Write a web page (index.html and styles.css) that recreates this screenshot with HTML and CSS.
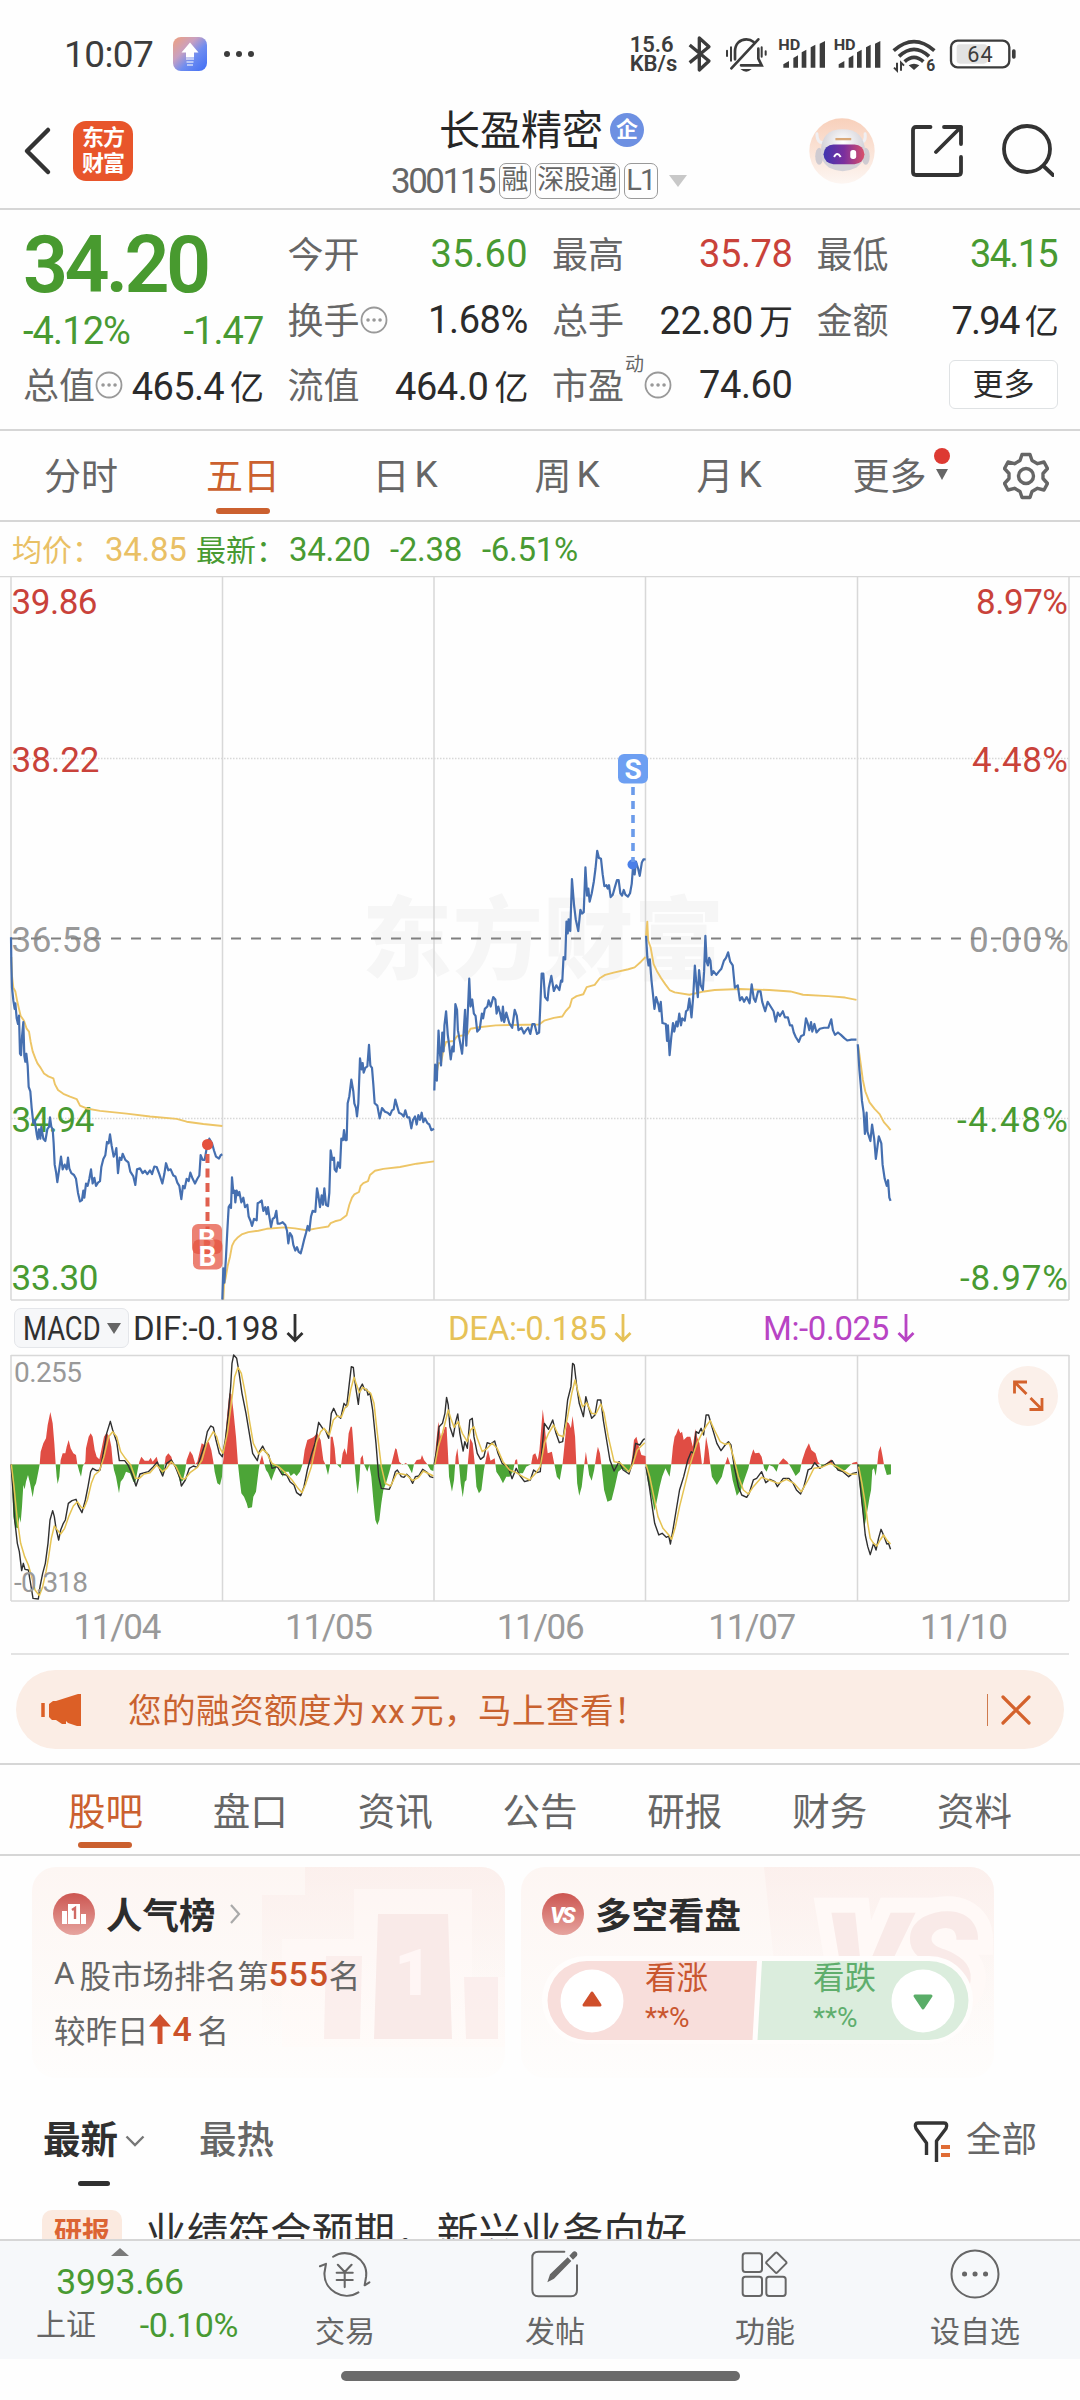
FILE: index.html
```
<!DOCTYPE html>
<html lang="zh-CN">
<head>
<meta charset="utf-8">
<title>长盈精密 300115</title>
<link rel="stylesheet" href="styles.css">
</head>
<body>
<div class="screen">

  <div class="status">
    <span class="clock">10:07</span>
    <svg class="upicon" viewBox="0 0 34 34"><defs><linearGradient id="up" x1="0" y1="0" x2="1" y2="1"><stop offset="0" stop-color="#f0a07c"/><stop offset=".35" stop-color="#c9a0c0"/><stop offset=".6" stop-color="#6f8df0"/><stop offset="1" stop-color="#3f6df5"/></linearGradient></defs><rect width="34" height="34" rx="8" fill="url(#up)"/><path d="M17 5.500l8.500 10h-4.500v5h-8v-5H8.500z" fill="#fff"/><path d="M13 22h8M13.500 25h7M14 28h6" stroke="#fff" stroke-width="1.500" opacity=".7"/></svg>
    <span class="dots"><i></i><i></i><i></i></span>
    <span class="speed">15.6<br>KB/s</span>
    <svg class="st" width="33.300" height="40" viewBox="250 40 100 120"><path d="M267 73l58 48-29 27V52l29 26-58 48" fill="none" stroke="#3c3c3c" stroke-width="10" stroke-linejoin="round"/></svg>
    <svg class="st" width="56.700" height="40" viewBox="350 40 170 120"><g fill="none" stroke="#3c3c3c" stroke-width="8" stroke-linecap="round"><path d="M404 116V92c0-22 14-36 34-36 8 0 16 3 22 8M474 84v30l10 20h-62"/><path d="M393 143L474 56"/><path d="M392 80v40M380 90v16M484 80v28M496 92v10" stroke-width="6"/></g><path d="M420 145h34q-16 16-34 0z" fill="#3c3c3c"/></svg>
    <svg class="st" width="56.700" height="40" viewBox="520 40 170 120"><text x="533" y="88" class="hd" textLength="66" lengthAdjust="spacingAndGlyphs">HD</text><path d="M548 141v-10l17-10v20zM578 141v-29l14-8v37zM603 141v-46l14-8v54zM630 141v-61l14-8v69zM657 141v-72l16-8v80z" fill="#3c3c3c"/></svg>
    <svg class="st" width="56.700" height="40" viewBox="690 40 170 120"><text x="701" y="88" class="hd" textLength="66" lengthAdjust="spacingAndGlyphs">HD</text><path d="M716 141v-10l17-10v20zM746 141v-29l14-8v37zM771 141v-46l14-8v54zM798 141v-61l14-8v69zM825 141v-72l16-8v80z" fill="#3c3c3c"/></svg>
    <svg class="st" width="56.700" height="40" viewBox="860 40 170 120"><g fill="none" stroke="#3c3c3c" stroke-width="11"><path d="M880 90q61-54 122 0"/><path d="M896 107q45-42 90 0"/><path d="M913 123q28-26 56 0"/></g><path d="M925 134q16-10 32 0l-16 14z" fill="#3c3c3c"/><path d="M890 126v24l-9-9M902 150v-24l9 9" fill="none" stroke="#3c3c3c" stroke-width="6"/><text x="978" y="150" class="six">6</text></svg>
    <svg class="st" width="73.300" height="40" viewBox="1030 40 220 120"><rect x="1068" y="71" width="92" height="58" rx="10" fill="#e2e2e2"/><rect x="1051" y="60" width="175" height="80" rx="20" fill="none" stroke="#3c3c3c" stroke-width="7"/><rect x="1234" y="86" width="11" height="28" rx="5" fill="#3c3c3c"/><text x="1138" y="124" class="batt" textLength="76" text-anchor="middle">64</text></svg>
  </div>

  <header class="header">
    <div class="left">
      <svg width="29" height="50" viewBox="0 0 29 50"><path d="M25 4L4 25l21 21" fill="none" stroke="#333" stroke-width="4.500" stroke-linecap="round" stroke-linejoin="round"/></svg>
      <div class="logo"><span>东方</span><span>财富</span></div>
    </div>
    <div class="title">
      <h1>长盈精密<b>企</b></h1>
      <div class="sub"><span class="code">300115</span><i>融</i><i>深股通</i><i class="lv">L1</i><svg width="20" height="13" viewBox="0 0 20 13"><path d="M1 0h18L10 12z" fill="#c8c8c8"/></svg></div>
    </div>
    <div class="right">
      <svg width="66" height="66" viewBox="0 0 200 200"><defs><linearGradient id="bg" x1="0" y1="0" x2="0" y2="1"><stop offset="0" stop-color="#f8d0bb"/><stop offset="1" stop-color="#fdf6f2"/></linearGradient><linearGradient id="vis"><stop offset="0" stop-color="#3f36b0"/><stop offset=".5" stop-color="#7b2f9e"/><stop offset="1" stop-color="#d9506a"/></linearGradient><radialGradient id="hd" cx=".5" cy=".3"><stop offset="0" stop-color="#fff"/><stop offset="1" stop-color="#d4d2d8"/></radialGradient></defs><circle cx="100" cy="100" r="99" fill="url(#bg)"/><path d="M24 48q0 30 22 26M170 48q4 28-18 26" fill="none" stroke="#f0eff2" stroke-width="9" stroke-linecap="round"/><ellipse cx="31" cy="116" rx="12" ry="26" fill="#cfcbd1"/><ellipse cx="172" cy="116" rx="12" ry="26" fill="#cfcbd1"/><path d="M36 100q2-66 66-66t68 66q-2 34-26 50-42 22-84 0-24-16-24-50z" fill="url(#hd)"/><rect x="44" y="80" width="124" height="60" rx="30" fill="url(#vis)"/><path d="M76 118q9-18 20 0" fill="none" stroke="#fff" stroke-width="6"/><rect x="125" y="97" width="18" height="27" rx="8" fill="#fff"/><path d="M80 64h48" stroke="#d9a878" stroke-width="7"/></svg>
      <svg width="52" height="52" viewBox="0 0 52 52"><g fill="none" stroke="#333" stroke-width="3.800" stroke-linecap="round" stroke-linejoin="round"><path d="M19.500 2H5q-3 0-3 3v42q0 3 3 3h42q3 0 3-3V32"/><path d="M33 2h17v17M50 2L25 27"/></g></svg>
      <svg width="52" height="54" viewBox="0 0 52 54"><g fill="none" stroke="#333" stroke-width="3.800" stroke-linecap="round"><circle cx="25" cy="25" r="23"/><path d="M41.500 42L51 51"/></g></svg>
    </div>
  </header>

  <section class="quote">
    <div class="qcol first">
      <div class="price">34.20</div>
      <div class="change"><span>-4.12%</span><span>-1.47</span></div>
      <div class="cell tight"><label>总值<svg class="info" viewBox="0 0 28 28"><circle cx="14" cy="14" r="12.500"/><path d="M8 14h.1M14 14h.1M20 14h.1"/></svg></label><span>465.4<em>亿</em></span></div>
    </div>
    <div class="qcol">
      <div class="cell"><label>今开</label><span class="green loose">35.60</span></div>
      <div class="cell"><label>换手<svg class="info" viewBox="0 0 28 28"><circle cx="14" cy="14" r="12.500"/><path d="M8 14h.1M14 14h.1M20 14h.1"/></svg></label><span>1.68%</span></div>
      <div class="cell"><label>流值</label><span>464.0<em>亿</em></span></div>
    </div>
    <div class="qcol">
      <div class="cell"><label>最高</label><span class="red">35.78</span></div>
      <div class="cell"><label>总手</label><span>22.80<em>万</em></span></div>
      <div class="cell"><label>市盈<sup>动</sup><svg class="info" viewBox="0 0 28 28"><circle cx="14" cy="14" r="12.500"/><path d="M8 14h.1M14 14h.1M20 14h.1"/></svg></label><span>74.60</span></div>
    </div>
    <div class="qcol">
      <div class="cell"><label>最低</label><span class="green narrow">34.15</span></div>
      <div class="cell"><label>金额</label><span class="narrow">7.94<em>亿</em></span></div>
      <div class="cell end"><button class="more">更多</button></div>
    </div>
  </section>

  <nav class="periods">
    <a>分时</a><a class="on">五日</a><a>日<em>K</em></a><a>周<em>K</em></a><a>月<em>K</em></a>
    <a class="moretab">更多<svg width="20" height="42" viewBox="0 0 20 42"><circle cx="10" cy="8" r="8" fill="#dd3a32"/><path d="M4 21h12l-6 11z" fill="#666"/></svg></a>
    <a class="gear"><svg width="46" height="48" viewBox="0 0 46 48"><g fill="none" stroke="#666" stroke-width="3.400" stroke-linejoin="round"><path d="M19 2.500h8l2 6 5.500 3.200 6.500-1.700 3.500 6.500-4.500 5v5l4.500 5-3.500 6.500-6.500-1.700L29 39.500l-2 6h-8l-2-6-5.500-3.200L5 38l-3.500-6.500 4.500-5v-5l-4.500-5L5 10l6.500 1.700L17 8.500z"/><circle cx="23" cy="24" r="7.500"/></g></svg></a>
  </nav>

  <div class="legend"><span class="avg">均价：</span><b class="avg">34.85</b><span>最新：</span><b>34.20</b><b>-2.38</b><b>-6.51%</b></div>

  <svg class="chart" width="1080" height="726" viewBox="0 576 1080 726">
    <text x="362" y="972" class="watermark" textLength="362">东方财富</text>
    <g class="grid"><path d="M0 576.500H1080"/><path d="M11 577V1300M222.500 577V1300M434 577V1300M645.500 577V1300M857.500 577V1300M1069 577V1300"/><path d="M11 1300H1069" stroke-width="2"/><path d="M11 758.500H1069M11 1118.500H1069" stroke-dasharray="1.500 1.500" stroke="#d4d4d4"/></g>
    <g class="axis">
      <text x="11.500" y="614" class="r" textLength="86">39.86</text><text x="11.500" y="772" class="r" textLength="88">38.22</text><text x="11.500" y="952" class="g" textLength="90">36.58</text><text x="11.500" y="1132" class="n" textLength="83">34.94</text><text x="11.500" y="1290" class="n" textLength="87">33.30</text>
      <text x="976" y="614" class="r" textLength="92">8.97%</text><text x="972" y="772" class="r" textLength="96">4.48%</text><text x="969" y="952" class="g" textLength="100">0.00%</text><text x="957" y="1132" class="n" textLength="111">-4.48%</text><text x="960" y="1290" class="n" textLength="108">-8.97%</text>
    </g>
    <path d="M11 938.500H1069" stroke="#808080" stroke-width="2" stroke-dasharray="10 10"/>
    <g transform="translate(0 570) scale(.33333 .47193)">
      <polyline class="avgline" points="34,820 36,860 40,885 46,893 52,915 57,930 62,945 72,955 80,972 87,978 92,1000 98,1020 106,1035 112,1045 122,1055 132,1067 145,1073 160,1077 165,1090 174,1102 190,1110 210,1116 230,1121 240,1135 260,1141 300,1146 380,1152 450,1158 530,1163 560,1169 610,1174 667,1178"/>
      <polyline class="avgline" points="670,1546 672,1515 677,1500 683,1475 690,1455 696,1432 703,1422 712,1415 725,1408 745,1403 775,1400 800,1396 855,1393 885,1395 920,1399 950,1395 985,1391 992,1384 1005,1380 1022,1377 1040,1367 1048,1345 1056,1330 1063,1323 1077,1318 1082,1305 1090,1299 1104,1295 1110,1282 1125,1273 1150,1269 1200,1265 1250,1258 1302,1253"/>
      <polyline class="line" points="33,778 34,830 36,885 40,912 44,930 46,918 50,950 54,962 57,944 60,1025 63,1028 66,990 70,958 73,1030 76,1042 79,1025 83,1050 86,1095 91,1105 95,1140 100,1172 104,1165 110,1195 113,1206 117,1185 121,1205 124,1180 130,1205 136,1210 142,1185 147,1180 150,1160 154,1180 158,1185 161,1215 164,1260 168,1275 172,1297 178,1268 183,1243 188,1270 194,1260 200,1270 204,1245 208,1268 214,1278 222,1282 228,1290 234,1320 240,1338 246,1335 250,1315 253,1330 258,1300 263,1305 268,1290 273,1270 278,1300 283,1288 288,1305 294,1298 300,1295 304,1265 310,1248 316,1240 321,1212 326,1215 330,1196 335,1220 341,1243 346,1235 349,1225 354,1278 359,1245 364,1250 368,1237 376,1250 385,1255 391,1275 400,1285 406,1303 411,1270 420,1268 428,1278 435,1273 442,1280 450,1272 456,1280 463,1264 470,1265 478,1280 487,1300 493,1280 498,1257 505,1272 512,1270 520,1283 526,1285 532,1298 538,1305 544,1333 549,1305 554,1310 560,1290 566,1295 571,1277 578,1290 585,1300 592,1290 598,1283 602,1240 608,1250 614,1250 620,1225 628,1205 636,1215 642,1230 648,1243 657,1247 662,1240 667,1238"/>
      <polyline class="line" points="667,1546 670,1480 673,1510 678,1455 682,1400 686,1350 690,1345 693,1352 696,1287 700,1320 704,1315 706,1340 710,1315 714,1325 718,1318 724,1340 730,1330 735,1350 742,1345 746,1370 752,1380 756,1390 762,1375 770,1378 773,1342 778,1340 785,1336 790,1358 796,1350 800,1365 804,1350 808,1370 813,1392 818,1375 824,1372 829,1358 833,1385 840,1385 848,1382 856,1388 861,1400 865,1427 870,1405 876,1412 880,1430 886,1442 891,1435 896,1445 902,1448 907,1435 912,1420 918,1405 923,1390 928,1400 933,1370 938,1358 946,1360 951,1310 955,1325 960,1350 965,1325 969,1345 973,1310 978,1345 984,1348 988,1320 992,1230 997,1250 1002,1245 1004,1270 1009,1275 1014,1255 1020,1267 1024,1205 1029,1208 1032,1187 1036,1208 1040,1208 1043,1130 1048,1115 1054,1080 1060,1105 1063,1130 1068,1140 1071,1158 1075,1130 1080,1035 1085,1058 1088,1045 1091,1065 1096,1055 1102,1052 1107,1006 1111,1050 1116,1055 1120,1090 1124,1130 1132,1135 1139,1162 1146,1140 1155,1148 1163,1150 1170,1155 1176,1145 1181,1143 1186,1122 1191,1135 1197,1150 1205,1153 1211,1158 1216,1145 1222,1160 1228,1160 1234,1183 1239,1165 1245,1158 1250,1175 1255,1155 1260,1165 1265,1150 1270,1170 1275,1162 1282,1172 1288,1175 1294,1187 1302,1184"/>
    </g>
    <g transform="translate(420 570) scale(.42092 .47193)">
      <polyline class="avgline" points="36,1070 40,1065 44,1045 50,1045 56,1015 62,1000 80,998 88,988 112,985 120,972 140,969 180,965 220,964 283,963 295,955 318,949 338,946 346,935 356,925 361,909 372,903 388,899 396,884 415,879 427,865 440,858 460,853 495,846 510,842 525,830 536,820"/>
      <polyline class="avgline" points="537,775 540,745 542,785 548,800 555,835 563,850 573,865 583,878 593,890 605,895 640,900 675,893 700,890 760,888 830,890 880,893 910,900 970,903 1010,906 1037,911"/>
      <polyline class="avgline" points="1041,1008 1046,1040 1052,1080 1058,1105 1068,1128 1080,1142 1092,1153 1102,1170 1112,1180 1118,1187"/>
      <polyline class="line" points="34,1103 36,1048 38,1060 40,1082 44,976 47,1020 50,1050 53,980 56,1020 58,965 62,935 66,985 69,1005 73,1037 77,1010 80,1020 84,920 88,932 90,975 95,1000 100,1025 103,990 107,932 110,1008 113,950 117,866 120,925 124,910 128,940 132,945 136,978 142,972 147,940 150,950 154,930 160,925 163,912 168,925 174,905 179,910 182,940 186,925 190,938 194,955 197,925 200,958 205,938 212,960 219,970 225,932 230,945 234,975 241,970 247,982 252,975 257,970 262,983 267,962 272,962 278,983 283,980 285,940 289,855 293,855 297,905 303,912 306,885 312,860 318,892 324,880 331,890 335,870 338,872 341,820 345,825 348,745 351,770 353,740 357,765 361,655 366,710 370,740 376,765 381,720 385,728 389,725 393,630 397,690 400,675 403,703 408,685 413,660 417,632 421,595 425,610 430,612 434,645 438,670 443,668 446,675 449,668 453,693 458,688 463,672 468,657 472,657 476,685 480,690 484,678 488,688 494,692 499,685 503,665 506,630 510,645 513,618 518,632 522,648 527,620 531,613 536,613"/>
      <polyline class="line" points="537,775 540,820 543,838 546,825 550,870 553,895 557,930 561,905 566,920 569,935 572,915 576,960 584,962 587,998 589,965 593,1028 597,990 601,960 604,978 609,957 612,967 616,940 620,965 623,950 629,955 632,935 636,932 640,908 645,948 649,905 653,838 657,880 660,905 663,848 667,880 672,890 675,850 678,775 681,830 684,838 687,822 690,828 693,858 697,850 704,858 711,850 716,845 722,828 727,822 732,810 737,830 743,838 748,885 755,880 760,912 765,905 770,915 776,905 783,918 788,878 793,908 797,915 803,893 809,893 813,915 820,935 826,915 833,925 840,935 845,957 850,938 855,945 862,935 867,948 874,948 879,965 884,965 888,980 893,990 900,1000 905,988 912,985 917,950 921,960 925,975 929,958 932,978 937,962 942,980 950,972 960,970 970,970 977,952 981,975 986,985 993,980 1000,985 1008,992 1015,997 1025,995 1037,995"/>
      <polyline class="line" points="1040,1005 1044,1060 1047,1090 1050,1125 1054,1150 1057,1195 1061,1150 1063,1190 1070,1210 1074,1175 1079,1205 1083,1248 1090,1200 1096,1215 1099,1260 1104,1290 1109,1305 1112,1293 1115,1330 1118,1337"/>
    </g>
    <g class="buy"><circle cx="207.500" cy="1144.500" r="5.500" fill="#e5513d"/><path d="M207.500 1154V1230" stroke="#e0604f" stroke-width="4" stroke-dasharray="9 5.500"/><rect x="192" y="1224" width="30" height="30" rx="6"/><text x="207" y="1249">B</text><rect x="193" y="1239.500" width="29.500" height="30" rx="6" class="top"/><text x="207.500" y="1265.500">B</text></g>
    <g class="sell"><circle cx="632.500" cy="864.500" r="5" fill="#4a7fe8"/><path d="M633 787V862" stroke="#6b9bea" stroke-width="3.600" stroke-dasharray="8 6"/><rect x="618" y="754" width="30" height="29.500" rx="6"/><text x="633" y="778.500">S</text></g>
  </svg>

  <div class="macdbar">
    <span class="chip"><b>MACD</b><svg width="14" height="11" viewBox="0 0 14 11"><path d="M0 0h14L7 11z" fill="#666"/></svg></span>
    <span class="ind dif">DIF:-0.198<svg viewBox="0 0 18 30"><path d="M9 1v26M1.500 20L9 27.500l7.500-7.500"/></svg></span>
    <span class="ind dea">DEA:-0.185<svg viewBox="0 0 18 30"><path d="M9 1v26M1.500 20L9 27.500l7.500-7.500"/></svg></span>
    <span class="ind m">M:-0.025<svg viewBox="0 0 18 30"><path d="M9 1v26M1.500 20L9 27.500l7.500-7.500"/></svg></span>
  </div>

  <svg class="chart" width="1080" height="248" viewBox="0 1354 1080 248">
    <defs>
      <clipPath id="above"><rect x="0" y="0" width="1600" height="523"/></clipPath>
      <clipPath id="below"><rect x="0" y="523" width="1600" height="500"/></clipPath>
      <g id="histA"><path d="M33,523 36,580 40,680 46,712 54,715 58,680 62,698 66,650 70,585 74,598 78,575 84,555 90,580 98,622 103,590 108,580 112,560 116,540 119,523 122,485 130,460 138,445 143,405 151,366 158,400 163,460 167,523 170,560 173,582 178,560 182,510 188,490 196,490 200,470 206,450 212,475 220,490 228,495 232,523 238,545 243,560 248,530 256,515 258,475 266,440 272,430 278,440 284,480 290,500 298,508 304,480 312,440 320,428 328,440 334,470 338,515 342,540 348,560 357,610 362,575 370,565 378,545 390,550 400,575 406,578 412,545 418,515 424,500 434,512 446,512 452,503 458,515 470,500 476,523 484,550 490,550 497,500 505,490 514,500 520,523 530,540 540,575 548,573 556,540 560,510 570,483 578,495 586,523 592,515 598,490 605,460 614,465 626,455 634,480 640,515 644,545 652,580 660,585 666,560 668,523 670,510 676,440 682,370 688,310 694,312 700,360 708,440 714,523 718,560 724,610 732,620 740,640 744,655 756,652 760,620 768,605 776,540 780,515 786,495 792,520 798,540 804,548 814,572 822,550 830,530 840,535 848,560 855,545 866,545 872,558 882,550 890,558 900,545 908,523 914,480 922,450 940,442 952,430 962,450 970,510 976,523 984,555 990,525 992,440 998,440 1004,475 1008,520 1022,535 1028,490 1034,475 1040,495 1046,430 1052,410 1056,410 1060,460 1064,523 1068,570 1073,613 1078,570 1082,505 1088,495 1092,523 1102,545 1108,525 1114,560 1120,630 1126,690 1132,705 1138,690 1144,640 1150,600 1158,580 1168,545 1176,515 1186,475 1190,478 1198,515 1208,525 1218,518 1226,530 1236,550 1242,523 1250,510 1262,508 1266,495 1272,510 1282,523 1292,540 1300,543 1302,523z"/></g>
      <g id="histB"><path d="M10,523 14,470 20,395 26,440 32,430 36,410 40,412 43,480 46,560 53,605 58,570 62,500 66,475 70,523 74,580 79,622 84,575 88,570 92,510 97,445 103,460 108,523 112,590 118,610 124,600 130,540 136,500 140,480 146,512 156,505 160,545 168,560 176,580 184,560 192,560 200,545 206,510 210,508 214,550 224,550 232,530 244,523 248,495 254,490 260,510 264,480 268,420 272,358 276,400 280,450 284,490 294,485 300,523 306,560 313,570 320,520 324,470 330,395 335,400 340,415 344,378 350,440 355,580 360,617 366,590 372,525 376,485 380,520 384,555 390,572 396,540 402,490 405,470 410,490 414,530 420,600 428,635 438,630 446,590 454,545 464,535 474,545 482,540 488,500 492,450 498,440 504,470 510,495 520,498 521,540 526,580 532,605 538,640 541,662 546,640 554,590 560,560 568,535 572,545 578,560 582,523 586,470 590,440 594,432 599,415 604,430 608,425 612,450 620,440 628,440 634,470 640,417 644,440 650,460 656,523 660,520 666,440 672,480 676,523 680,560 692,585 704,560 710,530 718,500 724,523 730,570 740,617 750,600 758,570 768,535 774,500 780,478 784,490 794,488 800,500 806,535 812,545 818,525 828,530 836,545 842,520 852,505 862,515 872,535 882,558 892,545 898,510 906,480 914,460 920,480 930,490 936,515 946,530 958,518 968,508 974,530 990,543 1002,540 1010,530 1020,518 1030,515 1032,523 1036,580 1042,650 1048,712 1054,670 1060,625 1064,600 1067,540 1071,535 1075,558 1079,523 1082,485 1087,468 1092,500 1096,530 1102,555 1112,553 1112,523z"/></g>
    </defs>
    <g class="grid"><path d="M11 1355.500H1069"/><path d="M11 1355V1601M222.500 1355V1601M434 1355V1601M645.500 1355V1601M857.500 1355V1601M1069 1355V1601"/><path d="M11 1601H1069" stroke-width="2"/></g>
    <g transform="translate(0 1290) scale(.33333)">
      <use href="#histA" clip-path="url(#above)" class="up-bars"/><use href="#histA" clip-path="url(#below)" class="down-bars"/>
      <polyline class="difline" points="33,523 38,590 44,690 52,760 58,785 65,842 70,820 75,838 85,840 90,870 95,900 99,925 115,927 120,890 128,850 136,820 144,760 150,690 158,662 163,680 168,715 176,750 182,720 190,700 196,690 205,640 216,632 228,628 236,650 246,668 256,630 264,590 272,545 278,535 290,542 300,540 308,500 320,430 331,394 338,420 350,455 358,512 374,512 384,525 395,550 408,588 420,552 445,545 460,530 472,516 480,540 488,558 500,520 514,510 526,530 540,565 544,588 556,570 568,535 580,528 592,532 604,495 614,465 622,425 632,408 640,412 648,450 658,490 667,500 676,450 684,380 692,290 696,220 701,195 710,205 716,240 726,310 738,370 748,430 758,490 772,512 778,485 788,468 796,485 806,495 816,535 832,530 846,553 860,555 870,575 882,585 890,608 902,617 912,590 922,540 934,495 945,460 956,397 968,415 976,420 986,445 994,370 1001,355 1010,375 1022,385 1032,340 1040,350 1048,280 1054,230 1060,232 1064,270 1075,343 1080,295 1087,282 1094,300 1100,298 1104,315 1110,310 1118,360 1128,460 1136,560 1144,595 1168,598 1176,580 1186,545 1192,540 1204,560 1212,562 1220,553 1228,560 1238,580 1246,560 1256,558 1268,538 1282,548 1290,560 1300,563"/>
      <polyline class="dealine" points="34,523 42,590 52,690 62,760 74,800 85,825 95,860 105,900 118,917 128,890 138,845 146,800 154,745 163,708 172,720 182,732 194,715 206,680 220,648 232,635 244,652 252,655 262,630 274,580 284,555 298,543 312,500 326,440 338,425 350,440 362,485 376,505 392,525 406,565 418,565 432,552 450,548 470,525 488,545 500,535 514,515 528,530 544,565 554,568 570,548 592,532 606,510 620,460 640,425 650,440 660,475 669,490 682,430 694,340 704,260 714,232 724,250 736,310 748,390 760,460 776,492 788,478 800,488 816,520 836,530 856,548 876,570 894,595 906,608 916,585 934,530 950,455 962,425 972,415 988,435 1000,390 1012,378 1024,382 1034,355 1044,345 1052,300 1062,262 1070,285 1078,308 1088,292 1100,300 1112,310 1122,340 1132,430 1144,530 1156,580 1172,588 1190,550 1206,552 1220,555 1238,572 1256,562 1270,543 1300,558"/>
    </g>
    <g transform="translate(430 1290) scale(.41454 .33333)">
      <use href="#histB" clip-path="url(#above)" class="up-bars"/><use href="#histB" clip-path="url(#below)" class="down-bars"/>
      <polyline class="difline" points="10,523 16,480 22,410 30,400 36,370 40,322 44,345 48,410 56,440 62,395 67,372 72,430 80,483 84,455 90,475 96,390 102,385 106,440 114,490 122,508 130,500 138,458 146,462 156,453 164,490 174,520 188,530 198,566 208,535 216,555 228,575 242,570 250,540 258,548 266,545 270,480 276,400 286,418 296,390 304,430 312,458 320,455 326,400 332,330 340,290 344,220 348,225 354,290 360,340 370,380 376,320 382,350 390,385 398,375 404,330 412,330 418,390 426,450 434,510 444,543 456,515 466,540 480,552 488,520 496,460 506,465 514,450 518,446"/>
      <polyline class="difline" points="521,530 528,580 536,650 542,700 552,735 560,730 570,742 576,738 580,762 586,720 594,660 602,600 612,560 622,510 630,485 636,490 642,425 648,430 654,415 660,435 666,375 672,375 680,410 692,460 702,482 712,465 720,455 726,465 734,530 744,590 752,615 764,622 770,610 780,570 788,565 800,545 810,578 820,568 832,575 838,590 852,565 866,565 876,580 884,600 894,612 902,590 912,540 920,535 928,518 940,535 956,522 970,512 984,540 996,545 1010,560 1020,550 1030,547"/>
      <polyline class="difline" points="1032,523 1038,590 1044,660 1050,735 1056,770 1062,794 1070,760 1076,780 1082,745 1088,718 1094,735 1102,762 1106,760 1111,778"/>
      <polyline class="dealine" points="12,523 20,470 30,430 38,390 44,360 50,385 58,412 68,395 78,430 90,455 98,420 106,410 114,445 126,485 138,475 150,460 162,475 176,515 192,540 208,548 224,560 240,570 256,548 266,530 276,460 286,430 298,405 310,435 322,440 332,380 342,310 350,270 358,310 368,350 378,338 390,370 400,372 412,342 420,370 430,440 444,515 458,518 480,545 490,520 500,480 518,458"/>
      <polyline class="dealine" points="521,523 530,560 540,620 550,680 562,715 576,735 583,748 592,710 602,650 614,590 626,530 634,498 644,460 656,430 668,405 676,392 686,420 700,455 712,463 722,460 732,500 744,560 756,600 768,612 780,590 800,562 818,570 840,580 860,568 878,580 896,605 912,570 926,535 944,532 966,520 984,532 1010,552 1030,553"/>
      <polyline class="dealine" points="1034,530 1042,580 1050,640 1056,700 1062,745 1070,760 1078,768 1086,750 1094,735 1102,750 1111,762"/>
    </g>
    <g class="scale"><text x="14" y="1381.500" textLength="68">0.255</text><text x="14" y="1591.500" textLength="74">-0.318</text></g>
    <circle cx="1028" cy="1396" r="30" fill="#fbf0ea"/>
    <path d="M1014.500 1393.500v-11.500h12.500M1015 1382.500l11.500 11.500M1042 1398v11.500h-12.500M1041.500 1409l-11-11" fill="none" stroke="#d4622c" stroke-width="2.800"/>
  </svg>

  <div class="dates"><span>11/04</span><span>11/05</span><span>11/06</span><span>11/07</span><span>11/10</span></div>

  <div class="bannerwrap">
    <div class="banner">
      <svg width="42" height="36" viewBox="0 0 42 36"><path d="M2 11v14" stroke="#dc5f26" stroke-width="3.500"/><path d="M8 12l4-3h3L37 2h3v32h-4l-9-3-2-2v3h-4l-6-4h-4l-3-3z" fill="#dc5f26"/></svg>
      <span class="msg">您的融资额度为<em>xx</em>元，马上查看！</span>
      <i class="bar"></i>
      <svg width="30" height="30" viewBox="0 0 30 30"><path d="M2 2l26 26M28 2L2 28" stroke="#d4622c" stroke-width="3.200" stroke-linecap="round"/></svg>
    </div>
  </div>

  <nav class="sections"><a class="on">股吧</a><a>盘口</a><a>资讯</a><a>公告</a><a>研报</a><a>财务</a><a>资料</a></nav>

  <div class="cards">
    <div class="card">
      <svg class="deco" width="473" height="210" viewBox="0 0 473 210"><defs><linearGradient id="fade" x1="0" y1="0" x2="0" y2="1"><stop offset="0" stop-color="#fbeeeb" stop-opacity=".8"/><stop offset="1" stop-color="#fdf6f4" stop-opacity="0"/></linearGradient></defs><path d="M273 0H473V180H230V28h43z" fill="url(#fade)"/><path d="M322 22h118v88h33v70H250V72h72z" fill="#fff9f7" opacity=".55"/><g fill="#f9eae8"><path d="M346 47h70l4 125h-78z"/><path d="M294 89h36l-2 83h-36zM432 110h34v62h-32z" opacity=".7"/></g><text x="381" y="128" class="one">1</text></svg>
      <h3><svg width="42" height="42" viewBox="0 0 42 42"><defs><linearGradient id="rd" x1="0" y1="0" x2="0" y2="1"><stop offset="0" stop-color="#cc5651"/><stop offset="1" stop-color="#e6a49f"/></linearGradient></defs><circle cx="21" cy="21" r="21" fill="url(#rd)"/><path d="M9 18h5v13H9zM15 11h12v20H15zM28 21h5v10h-5z" fill="#fff"/><path d="M19 17l3-2v11" fill="none" stroke="#d06a65" stroke-width="2.400"/></svg>人气榜<svg class="chev" width="12" height="20" viewBox="0 0 12 20"><path d="M2 1l8 9-8 9" fill="none" stroke="#aaa" stroke-width="2.200"/></svg></h3>
      <p class="p1"><em>A</em>股市场排名第<b>555</b>名</p>
      <p class="p2">较昨日<svg width="22" height="30" viewBox="0 0 22 30"><path d="M11 0l11 12.500H13.500V30h-5V12.500H0z" fill="#d0502c"/></svg><b>4</b><span class="gap">名</span></p>
    </div>
    <div class="card">
      <svg class="deco" width="473" height="210" viewBox="0 0 473 210"><path d="M243 0H473V180H262z" fill="url(#fade)"/><text x="302" y="138" class="vsout">VS</text><text x="302" y="138" class="vsbig">VS</text></svg>
      <h3><svg width="42" height="42" viewBox="0 0 42 42"><circle cx="21" cy="21" r="21" fill="url(#rd)"/><text x="20" y="30" class="vs">VS</text></svg>多空看盘</h3>
      <div class="vote">
        <svg class="votebg" width="431" height="88" viewBox="0 0 431 88"><rect width="431" height="88" rx="44" fill="#fffdfc"/><path d="M45 5H215L210.500 84H45A39.500 39.500 0 0 1 45 5z" fill="#f8dedb"/><path d="M220 5H387A39.500 39.500 0 0 1 387 84H215.500z" fill="#dbeddd"/><circle cx="50" cy="45" r="31.500" fill="#fff"/><circle cx="381" cy="45" r="31.500" fill="#fff"/><path d="M50 37l8 12H42z" fill="#cf4f2b" stroke="#cf4f2b" stroke-width="3" stroke-linejoin="round"/><path d="M381 52l-8-12h16z" fill="#5aad68" stroke="#5aad68" stroke-width="3" stroke-linejoin="round"/></svg>
        <div class="opt up"><span>看涨</span><span>**%</span></div>
        <div class="opt down"><span>看跌</span><span>**%</span></div>
      </div>
    </div>
  </div>

  <div class="filter">
    <span class="new">最新</span><svg class="caret" width="20" height="12" viewBox="0 0 20 12"><path d="M1.500 1.500L10 10l8.500-8.500" fill="none" stroke="#777" stroke-width="2.400"/></svg>
    <span class="hot">最热</span>
    <svg class="funnel" width="40" height="42" viewBox="0 0 40 42"><path d="M13.500 34V22L3 7.500Q1 2 5 2h26q4 0 2 5.500L23.500 20v21" fill="none" stroke="#333" stroke-width="3.400" stroke-linejoin="round"/><path d="M28 26h9M28 34h9" stroke="#e06c35" stroke-width="4"/></svg>
    <span class="all">全部</span>
  </div>
  <div class="post"><i>研报</i><span>业绩符合预期，新兴业务向好</span></div>

  <footer class="dock">
    <div class="index"><svg width="18" height="8" viewBox="0 0 18 8"><path d="M9 0l9 8H0z" fill="#7a7a7a"/></svg><b>3993.66</b><p><span>上证</span><em>-0.10%</em></p></div>
    <a><svg width="60" height="56" viewBox="0 0 180 168"><g fill="none" stroke="#666" stroke-width="7" stroke-linecap="round" stroke-linejoin="round"><path d="M50 26C100 -8 168 34 161 92L156 122L172 112"/><path d="M135 146C84 178 18 138 21 80L26 50L6 58"/><path d="M66 53l23 24 23-24M62 80h54M62 104h54M89 78v50"/></g></svg>交易</a>
    <a><svg width="48" height="48" viewBox="0 0 144 144"><path d="M100 5H22Q4 5 4 22V120Q4 139 22 139H120Q138 139 138 120V46" fill="none" stroke="#666" stroke-width="6" stroke-linecap="round"/><path d="M49 97l8-24 53-51 11 11-52 53zM115 17l11-12q6-3 11 2 4 5 1 10l-12 12z" fill="#666"/></svg>发帖</a>
    <a><svg width="48" height="48" viewBox="0 0 144 144"><g fill="none" stroke="#666" stroke-width="6"><rect x="5" y="10" width="58" height="56" rx="8"/><rect x="5" y="80" width="58" height="58" rx="8"/><rect x="76" y="80" width="58" height="58" rx="8"/><path d="M103 9q3-3 6 0l26 26q3 3 0 6l-26 26q-3 3-6 0L77 41q-3-3 0-6z"/></g></svg>功能</a>
    <a><svg width="50" height="50" viewBox="0 0 50 50"><circle cx="25" cy="25" r="23.500" fill="none" stroke="#666" stroke-width="2"/><path d="M14.500 25h.1M25 25h.1M35.500 25h.1" stroke="#666" stroke-width="5" stroke-linecap="round"/></svg>设自选</a>
  </footer>
  <div class="home"><i></i></div>
</div>
</body>
</html>
```
FILE: styles.css
```
* { box-sizing: border-box; margin: 0; padding: 0; }
body { background: #fefefe; font-family: Roboto, "Noto Sans CJK SC", sans-serif; color: #303030; }
em, i { font-style: normal; }
svg { display: block; flex: none; }
.screen { width: 1080px; height: 2400px; overflow: hidden; display: flex; flex-direction: column; }
.screen > * { flex: none; }

.status { height: 108px; display: flex; align-items: center; padding: 0 63px 0 64px; color: #3c3c3c; }
.clock { font-size: 37px; width: 109px; letter-spacing: -.6px; }
.upicon { width: 34px; height: 34px; margin-right: 17px; }
.dots { display: flex; gap: 6px; margin-right: auto; }
.dots i { width: 6px; height: 6px; border-radius: 50%; background: #3c3c3c; }
.speed { font-size: 22px; line-height: 19px; font-weight: 600; width: 54px; }
.st { margin-top: -1px; }
.st text { font-family: Roboto, sans-serif; fill: #3c3c3c; }
.hd { font-size: 43px; font-weight: 700; }
.six { font-size: 47px; font-weight: 700; }
.batt { font-size: 65px; }

.header { height: 102px; border-bottom: 2px solid #d6d6d6; display: grid; grid-template-columns: 380px 1fr 380px; }
.left { display: flex; align-items: center; padding: 0 0 15px 23px; }
.logo { margin-left: 21px; width: 60px; height: 60px; border-radius: 13px; background: #e8552b; color: #fff; font-weight: 700; font-size: 22px; line-height: 26px; padding-top: 4px; text-align: center; }
.logo span { display: block; letter-spacing: -1px; }
.title h1 { font-size: 41px; font-weight: 400; line-height: 42px; display: flex; align-items: center; padding: 2px 0 0 59px; color: #262626; }
.title h1 b { width: 34px; height: 34px; margin: -2px 0 0 7px; border-radius: 50%; background: #6d90e2; color: #fff; font-size: 22px; line-height: 33px; text-align: center; }
.sub { display: flex; align-items: center; height: 36px; margin-top: 11px; padding-left: 11px; color: #666; }
.code { font-size: 35px; letter-spacing: -2.500px; width: 108px; }
.sub i { border: 1.500px solid #999; border-radius: 7px; height: 36px; line-height: 33px; font-size: 27px; padding: 0 1.500px; margin-right: 4px; letter-spacing: -.3px; white-space: nowrap; }
.sub .lv { letter-spacing: -2px; font-size: 29px; padding-right: 3px; }
.sub svg { margin-left: 6px; }
.right { display: flex; align-items: center; padding: 0 0 15px 109px; }
.right svg:nth-child(2) { margin-left: 36px; }
.right svg:nth-child(3) { margin-left: 39px; }

.quote { height: 221px; border-bottom: 2px solid #d6d6d6; padding: 11px 23px 0; display: grid; grid-template-columns: repeat(4, 1fr); column-gap: 24px; }
.cell { height: 65.500px; display: flex; align-items: center; justify-content: space-between; font-size: 38px; letter-spacing: -.4px; color: #2b2b2b; white-space: nowrap; }
.cell label { font-size: 36px; color: #666; display: flex; align-items: center; letter-spacing: 0; margin-top: -3px; }
.cell em { font-size: 34px; margin-left: 6px; }
.cell span { margin-top: 1px; }
.cell sup { font-size: 19px; align-self: flex-start; margin: -8px 0 0 1px; }
.end { justify-content: flex-end; }
.info { width: 28px; height: 28px; fill: none; stroke: #999; stroke-width: 1.800; margin-top: 4px; }
.info path { stroke-width: 3.500; stroke-linecap: round; }
.tight { letter-spacing: -.6px; }
.loose { letter-spacing: .4px; }
.narrow { letter-spacing: -1.700px; }
.green { color: #489a32; }
.red { color: #c9423a; }
.price { height: 86px; line-height: 88px; font-size: 79px; font-weight: 600; letter-spacing: -3.700px; color: #489a2f; }
.change { height: 45px; line-height: 48px; display: flex; justify-content: space-between; font-size: 38px; letter-spacing: -.9px; color: #489a32; }
.more { width: 109px; height: 49px; margin-right: -1px; border: 1.500px solid #dfe2e4; border-radius: 6px; background: #fff; font: 31px Roboto, "Noto Sans CJK SC", sans-serif; color: #2b2b2b; line-height: 44px; }

.periods { height: 91px; border-bottom: 2px solid #d6d6d6; display: flex; }
.periods a { width: 162px; display: flex; align-items: center; justify-content: center; font-size: 37px; color: #666; position: relative; padding-bottom: 3px; }
.periods em { margin-left: 5px; }
.on::after { content: ""; position: absolute; bottom: 6px; left: calc(50% - 27px); width: 54px; height: 6px; border-radius: 3px; background: #cb602f; }
.periods .on, .sections .on { color: #cb602f; }
.periods .moretab svg { margin: -11px -22px 0 5px; }
.periods .gear { width: 108px; padding-bottom: 0; }

.legend { height: 54px; display: grid; grid-template-columns: 93px 91px 93px 101px 92px 1fr; align-items: center; padding-left: 12px; color: #489a32; }
.legend span { font-size: 30px; white-space: nowrap; margin-top: -2px; }
.legend b { font-size: 33px; font-weight: 400; letter-spacing: -.3px; }
.legend .avg { color: #e9c065; }

.chart { font-family: Roboto, "Noto Sans CJK SC", sans-serif; }
.grid path { fill: none; stroke: #d8d8d8; stroke-width: 1.500; }
.watermark { font-size: 90px; font-weight: 900; fill: #f6f6f6; }
.axis text { font-size: 35px; }
.axis .r { fill: #c9423a; }
.axis .g { fill: #999; }
.axis .n { fill: #489a32; }
.line, .avgline, .difline, .dealine { fill: none; stroke-width: 2.200; stroke-linejoin: round; vector-effect: non-scaling-stroke; }
.line { stroke: #456fb0; }
.avgline { stroke: #edc566; stroke-width: 1.900; }
.difline { stroke: #303030; stroke-width: 1.400; }
.dealine { stroke: #e5c352; stroke-width: 1.500; }
.up-bars { fill: #e04d44; }
.down-bars { fill: #4ca537; }
.buy rect { fill: #e5513d; opacity: .72; }
.sell rect { fill: #6d9ff2; }
.buy text, .sell text { fill: #fff; font-weight: 700; font-size: 28px; text-anchor: middle; }

.macdbar { height: 52px; display: grid; grid-template-columns: 119px 315px 315px 1fr; align-items: center; padding-left: 14px; }
.chip { width: 115px; height: 40px; border: 1.500px solid #e4e6ea; border-radius: 7px; background: #f6f7f9; display: flex; align-items: center; padding-left: 8px; }
.chip b { font-weight: 400; font-size: 33px; width: 84px; white-space: nowrap; transform: scaleX(.83); transform-origin: 0 50%; }
.ind { font-size: 33px; display: flex; align-items: center; letter-spacing: -.35px; }
.ind svg { width: 18px; height: 30px; margin-left: 8px; fill: none; stroke: currentColor; stroke-width: 2.800; }
.dea { color: #e6c258; }
.m { color: #b844c4; }
.scale text { font-size: 28px; fill: #999; }

.dates { height: 53px; margin: 0 11px; border-bottom: 2px solid #e3e3e3; display: grid; grid-template-columns: repeat(5, 1fr); align-items: center; text-align: center; font-size: 35px; letter-spacing: -1.300px; color: #999; }

.bannerwrap { height: 110px; padding: 15px 16px 0; border-bottom: 2px solid #d6d6d6; }
.banner { height: 79px; border-radius: 40px; background: #fbede5; display: flex; align-items: center; padding: 0 33px 0 25px; color: #c9622f; }
.msg { font-size: 33.600px; letter-spacing: .4px; margin: -2px 0 0 45px; white-space: nowrap; }
.msg em { margin: 0 5px; }
.bar { width: 1.500px; height: 32px; background: #cf7a4d; margin: 0 13px 0 auto; }

.sections { height: 91px; border-bottom: 2px solid #d6d6d6; display: flex; padding: 0 33px; }
.sections a { flex: 1; display: flex; align-items: center; justify-content: center; font-size: 37.500px; color: #666; position: relative; padding-bottom: 3px; }

.cards { height: 231px; padding: 11px 0 0 32px; display: flex; gap: 16px; }
.card { position: relative; width: 473px; height: 211px; border-radius: 24px; overflow: hidden; background: linear-gradient(#fdf6f3, #fefdfc); }
.deco { position: absolute; left: 0; top: 0; }
.card h3 { position: relative; margin: 19px 0 0 21px; height: 54px; display: flex; align-items: center; font-size: 36.500px; font-weight: 600; color: #2d2d2d; }
.card h3 svg:first-child { margin: 2px 11px 0 0; }
.card .chev { margin: 1px 0 0 13px; }
.card p { position: relative; margin-left: 22px; height: 55px; display: flex; align-items: center; font-size: 31.500px; color: #666; }
.card p b { font-weight: 500; font-size: 34px; color: #cb5228; letter-spacing: .7px; }
.p1 { margin-top: 6px; }
.p1 em { margin-right: 5px; }
.gap { margin-left: 5px; }
.p2 svg { margin-right: 2px; }
.one { font-size: 64px; font-weight: 900; fill: #fff6f5; text-anchor: middle; }
.vs { font: italic 900 22px Roboto, sans-serif; fill: #fff; text-anchor: middle; letter-spacing: -2px; }
.vsbig, .vsout { font: italic 900 130px Roboto, sans-serif; letter-spacing: -8px; }
.vsbig { fill: #f9eae8; }
.vsout { fill: none; stroke: #fff9f7; stroke-width: 30px; }
.vote { position: relative; width: 431px; height: 88px; margin: 16px 0 0 21px; display: grid; grid-template-columns: 168px 1fr; padding-left: 103px; }
.votebg { position: absolute; left: 0; top: 0; }
.opt { position: relative; display: flex; flex-direction: column; font-size: 31.500px; line-height: 46px; }
.opt span + span { font-size: 28px; line-height: 32px; }
.up { color: #c9562f; }
.down { color: #5fae6d; }

.filter { height: 110px; display: flex; align-items: flex-start; padding: 26px 43px 0 43px; font-size: 37.500px; line-height: 54px; position: relative; color: #666; }
.filter::after { content: ""; position: absolute; left: 78px; top: 94px; width: 32px; height: 5px; border-radius: 3px; background: #303030; }
.new { font-weight: 600; color: #303030; }
.caret { margin: 22px 54px 0 7px; }
.hot { font-weight: 500; }
.funnel { margin: 8px 13px 0 auto; }
.all { font-size: 35.500px; }

.post { height: 42px; overflow: hidden; padding: 13px 0 0 42px; display: flex; align-items: flex-start; }
.post i { width: 80px; height: 46px; border-radius: 10px; background: #fbeae0; color: #dc6433; font-weight: 600; font-size: 28px; line-height: 45px; text-align: center; margin-right: 23px; }
.post span { font-size: 41.700px; line-height: 50px; margin-top: -1px; white-space: nowrap; }

.dock { height: 120px; border-top: 2px solid #d6d6d6; background: #f6f8fa; display: grid; grid-template-columns: 240px repeat(4, 210px); }
.dock a { display: flex; flex-direction: column; align-items: center; font-size: 30px; line-height: 44px; color: #666; position: relative; }
.dock a svg { height: 50px; margin: 8px 0 11px; }
.index { display: flex; flex-direction: column; align-items: center; padding-top: 7px; color: #489a32; }
.index b { font-weight: 400; font-size: 35.500px; line-height: 40px; margin-top: 6px; letter-spacing: -.2px; }
.index p { display: flex; justify-content: space-between; line-height: 44px; margin: 1px 0 0 36px; width: 202px; align-self: flex-start; }
.index span { font-size: 30px; color: #666; }
.index em { font-size: 34px; letter-spacing: -.4px; }
.home { height: 41px; display: flex; justify-content: center; padding-top: 12px; background: #fefefe; }
.home i { width: 399px; height: 10px; border-radius: 5px; background: #6b6b6b; }
```
